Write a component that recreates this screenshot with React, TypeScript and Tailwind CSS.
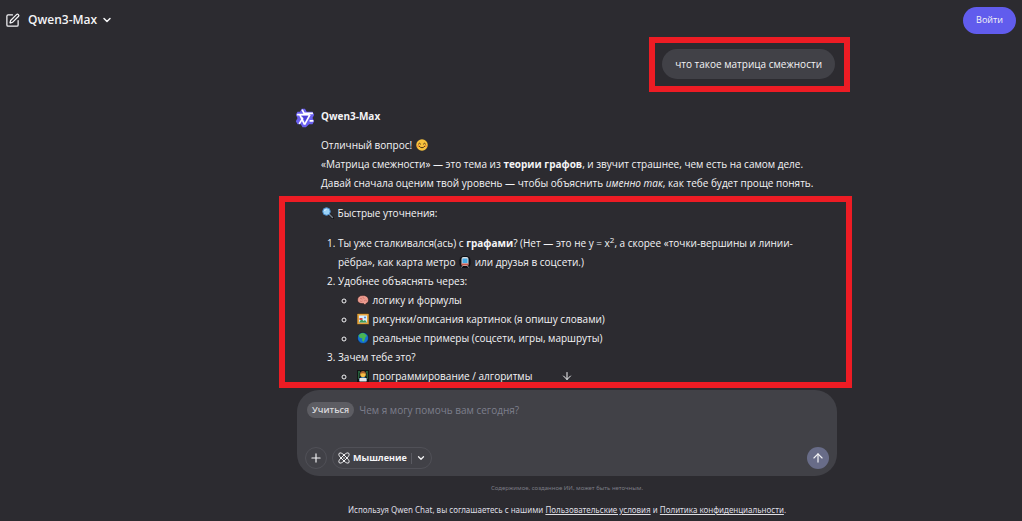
import { clsx } from 'clsx'
import { ArrowDown, ArrowUp, ChevronDown, Plus, SquarePen } from 'lucide-react'
import type { ReactNode } from 'react'

interface IconProps {
  className?: string,
}

function QwenLogo({ className }: IconProps) {
  return (
    <svg viewBox="0 0 24 24" className={className} aria-hidden="true">
      <path
        d="M8 1h4l2 3.500h7l2 3.500-2 4 2 4-2 3.500h-4L13 23H9l-2-3.500H3L1 16l2-4-2-4 2-3.500h3z"
        fill="#6a5ff0"
      />
      <path
        d="M8.500 2 11 6.500h10.500M2.500 8H17M5 19l5.500-8.500M17.500 15.500h4.500M18 8l-6.500 12M6 8.500l5.500 11.500"
        fill="none"
        stroke="#fff"
        strokeWidth="2"
      />
      <path d="M8.500 9.500h7L12 16z" fill="#4c3fd6" />
    </svg>
  )
}

function ThinkingIcon({ className }: IconProps) {
  return (
    <svg
      viewBox="0 0 24 24"
      className={className}
      fill="none"
      stroke="currentColor"
      strokeWidth="2"
      aria-hidden="true"
    >
      <path d="M12 6C8.500 2.500 4.500.7 2.500 2.500c-2.200 2.400.3 6.500 3.500 9.500-3.200 3-5.700 7.100-3.500 9.500 2 1.800 6 0 9.500-3.500" />
      <path d="M12 6c3.500-3.500 7.500-5.300 9.500-3.500 2.200 2.400-.3 6.500-3.500 9.500 3.200 3 5.700 7.100 3.500 9.500-2 1.800-6 0-9.500-3.500" />
      <path d="m12 6 6 6-6 6-6-6z" />
      <circle cx="12" cy="12" r="1.500" fill="currentColor" stroke="none" />
    </svg>
  )
}

interface EmojiProps {
  label: string,
  children: ReactNode,
}

function Emoji({ label, children }: EmojiProps) {
  return (
    <svg
      viewBox="0 0 24 24"
      role="img"
      aria-label={label}
      className="mx-px inline-block size-3 align-[-2px]"
    >
      {children}
    </svg>
  )
}

const SmileEmoji = () => (
  <Emoji label="smile">
    <circle cx="12" cy="12" r="11.500" fill="#f8c23c" />
    <path
      d="M4.500 10.500q2.500-4 5 0M14.500 10.500q2.500-4 5 0"
      fill="none"
      stroke="#4b3012"
      strokeWidth="2"
    />
    <path d="M6 14q6 7 12 0" fill="none" stroke="#4b3012" strokeWidth="2" />
    <circle cx="4.500" cy="14" r="2" fill="#f08a3c" />
    <circle cx="19.500" cy="14" r="2" fill="#f08a3c" />
  </Emoji>
)

const SearchEmoji = () => (
  <Emoji label="magnifier">
    <path d="m14 14 8 8" stroke="#111116" strokeWidth="5" strokeLinecap="round" />
    <path d="m14 14 7 7" stroke="#7b828c" strokeWidth="3" strokeLinecap="round" />
    <circle cx="9" cy="9" r="7.500" fill="#9ad2f7" stroke="#4a8ccb" strokeWidth="2" />
    <path d="M5 8q1-3 4-3" fill="none" stroke="#e6f6ff" strokeWidth="2" />
  </Emoji>
)

const MetroEmoji = () => (
  <Emoji label="metro">
    <rect x="1" y="0" width="22" height="24" rx="9" fill="#0d0d11" />
    <rect x="5" y="2" width="14" height="18" rx="4" fill="#d9dce0" />
    <rect x="7" y="5" width="10" height="9" fill="#43a6df" />
    <path d="M5 15h14v4H5z" fill="#c4574b" />
    <path d="m7 20-2 3M17 20l2 3" stroke="#8b9098" strokeWidth="2" />
  </Emoji>
)

const BrainEmoji = () => (
  <Emoji label="brain">
    <path
      d="M1 12c0-6 4-9 10-9 7-1 12 4 12 9 0 4-2 6-5 7l-2 3-3-3c-7 1-12-2-12-7z"
      fill="#eb9b8f"
      stroke="#221417"
    />
    <path
      d="M6 9q4-2 4 2M12 5q-1 4 3 4M14 14q3-3 6 0M6 14q3 2 5 0"
      fill="none"
      stroke="#c87068"
      strokeWidth="1.500"
    />
  </Emoji>
)

const PictureEmoji = () => (
  <Emoji label="picture">
    <rect x="0" y="1" width="24" height="22" fill="#e5a23d" stroke="#17140f" />
    <rect x="4" y="5" width="16" height="14" fill="#d6efff" />
    <path d="m4 19 5-7 4 4 3-2 4 5z" fill="#3d9a58" />
    <path d="M5 10h6v4H5z" fill="#cf4540" />
    <circle cx="16" cy="9" r="2" fill="#4d83ce" />
  </Emoji>
)

const GlobeEmoji = () => (
  <Emoji label="globe">
    <circle cx="12" cy="12" r="11" fill="#1670d3" stroke="#10151f" />
    <path
      d="M6 4c4-3 8-2 10 0l4 4-3 2-1 4-3 6-3-3 1-4-6-2-2-4z"
      fill="#49b653"
    />
  </Emoji>
)

const CoderEmoji = () => (
  <Emoji label="coder">
    <rect x="0" y="0" width="24" height="24" fill="#111514" />
    <path
      d="M2 4h4M2 8h3M18 4h4M19 8h3M2 12h3M19 12h3M2 16h2M20 16h2"
      stroke="#3ba463"
      strokeWidth="2"
    />
    <path d="M4 22q0-8 8-8t8 8z" fill="#2b7dc0" />
    <circle cx="12" cy="9" r="5.500" fill="#f4be45" />
    <path d="M6 8q1-6 6-6t6 6q-6-3-12 0z" fill="#a8622d" />
    <rect x="5" y="16" width="14" height="7" fill="#dfe4e8" />
  </Emoji>
)

const explainOptions = [
  { icon: <BrainEmoji />, text: 'логику и формулы' },
  { icon: <PictureEmoji />, text: 'рисунки/описания картинок (я опишу словами)' },
  { icon: <GlobeEmoji />, text: 'реальные примеры (соцсети, игры, маршруты)' },
]

const purposeOptions = [
  { icon: <CoderEmoji />, text: 'программирование / алгоритмы' },
]

interface OptionListProps {
  options: { icon: ReactNode, text: string }[],
}

function OptionList({ options }: OptionListProps) {
  return (
    <ul className="list-[circle] pl-[18px]">
      {options.map(({ icon, text }) => (
        <li key={text}>
          {icon} {text}
        </li>
      ))}
    </ul>
  )
}

function Highlight({ className }: IconProps) {
  return (
    <div
      className={clsx(
        'pointer-events-none absolute border-6 border-[#ed1c24]',
        className,
      )}
    />
  )
}

function Header() {
  return (
    <header className="flex h-10 items-center justify-between pr-[6px] pl-[5px]">
      <div className="flex items-center gap-2">
        <button type="button" aria-label="Новый чат">
          <SquarePen className="size-[15px]" />
        </button>
        <button
          type="button"
          className="flex items-center gap-1 text-[12px] font-semibold"
        >
          Qwen3-Max
          <ChevronDown className="size-3" strokeWidth={3} />
        </button>
      </div>
      <button
        type="button"
        className="h-[27px] rounded-full bg-[#615ced] px-[13px] text-[9px]"
      >
        Войти
      </button>
    </header>
  )
}

function UserMessage() {
  return (
    <div className="relative mr-[2px] self-end">
      <p className="rounded-[15px] bg-[#414147] px-[13px] py-[5px] text-[10px] leading-5">
        что такое матрица смежности
      </p>
      <Highlight className="-top-3 -right-[15px] -bottom-[13px] -left-[13px]" />
    </div>
  )
}

function AssistantMessage() {
  return (
    <article className="mt-7 flex gap-[6px] pr-2">
      <QwenLogo className="mt-px -ml-[2px] size-5 shrink-0" />
      <div className="min-w-0 grow text-[10px] leading-[19px]">
        <h2 className="font-bold">Qwen3-Max</h2>
        <p className="mt-[10px]">
          Отличный вопрос! <SmileEmoji />
          <br />
          «Матрица смежности» — это тема из <b>теории графов</b>, и звучит
          страшнее, чем есть на самом деле.
          <br />
          Давай сначала оценим твой уровень — чтобы объяснить{' '}
          <i>именно так</i>, как тебе будет проще понять.
        </p>
        <p className="mt-[11px]">
          <SearchEmoji /> Быстрые уточнения:
        </p>
        <ol className="mt-[11px] list-decimal pl-[17px]">
          <li>
            Ты уже сталкивался(ась) с <b>графами</b>? (Нет — это не y = x
            <sup className="text-[8px]">2</sup>, а скорее «точки-вершины и
            линии-рёбра», как карта метро <MetroEmoji /> или друзья в соцсети.)
          </li>
          <li>
            Удобнее объяснять через:
            <OptionList options={explainOptions} />
          </li>
          <li>
            Зачем тебе это?
            <OptionList options={purposeOptions} />
          </li>
        </ol>
      </div>
    </article>
  )
}

function Composer() {
  return (
    <form className="rounded-[22px] bg-[#414147] px-2 pt-[10px] pb-[7px]">
      <div className="flex items-center gap-[5px] pl-[2px]">
        <span className="rounded-full bg-[#5d5d63] px-[5px] text-[9px] leading-4 font-semibold text-[#d8d8dc]">
          Учиться
        </span>
        <input
          type="text"
          aria-label="Сообщение"
          placeholder="Чем я могу помочь вам сегодня?"
          className="min-w-0 grow bg-transparent text-[10px] leading-5 outline-none placeholder:text-[#7d7f8c]"
        />
      </div>
      <div className="mt-[27px] flex items-center gap-[5px]">
        <button
          type="button"
          aria-label="Добавить"
          className="flex size-[22px] items-center justify-center rounded-full border border-[#505057]"
        >
          <Plus className="size-[14px]" />
        </button>
        <button
          type="button"
          className="flex h-[22px] items-center rounded-full border border-[#505057] px-[5px] text-[9px] font-bold"
        >
          <ThinkingIcon className="mr-[3px] size-3" />
          Мышление
          <span className="mx-1 h-[11px] w-px bg-[#5a5a61]" />
          <ChevronDown className="size-[10px]" strokeWidth={3} />
        </button>
        <button
          type="submit"
          aria-label="Отправить"
          className="ml-auto flex size-[22px] items-center justify-center rounded-full bg-[#686c88]"
        >
          <ArrowUp className="size-[14px]" />
        </button>
      </div>
    </form>
  )
}

export default function App() {
  return (
    <div className="flex min-h-screen flex-col bg-[#2c2b30] font-['Open_Sans','Noto_Sans',sans-serif] text-[#f4f4f6]">
      <Header />
      <main className="flex grow flex-col pl-28">
        <div className="mx-auto flex w-full max-w-[540px] grow flex-col pt-[9px]">
          <UserMessage />
          <div className="relative">
            <AssistantMessage />
            <button
              type="button"
              aria-label="Вниз"
              className="absolute bottom-1 left-1/2 -translate-x-1/2"
            >
              <ArrowDown className="size-3" />
            </button>
            <Highlight className="-right-[15px] -bottom-[2px] -left-[18px] h-48" />
          </div>
          <div className="mt-1">
            <Composer />
          </div>
          <p className="mt-[7px] text-center font-['Noto_Sans',sans-serif] text-[6px] leading-[10px] text-[#7b7b84]">
            Содержимое, созданное ИИ, может быть неточным.
          </p>
          <footer className="mt-[10px] text-center font-['Noto_Sans',sans-serif] text-[8px] leading-[14px] text-[#dedee3]">
            Используя Qwen Chat, вы соглашаетесь с нашими{' '}
            <a href="#terms" className="underline">
              Пользовательские условия
            </a>{' '}
            и{' '}
            <a href="#privacy" className="underline">
              Политика конфиденциальности
            </a>
            .
          </footer>
        </div>
      </main>
    </div>
  )
}
